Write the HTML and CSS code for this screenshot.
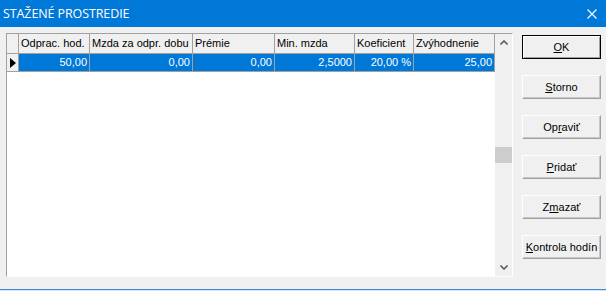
FILE: index.html
```html
<!DOCTYPE html>
<html lang="sk">
<head>
    <meta charset="UTF-8">
    <title>Stažené prostredie</title>
    <link rel="stylesheet" href="styles.css">
</head>
<body>
<div class="window">
    <div class="title-bar">
        <span class="title">STAŽENÉ PROSTREDIE</span>
        <svg class="close" width="10" height="10" viewBox="0 0 10 10">
            <path d="M0.5 0.5 L9.5 9.5 M9.5 0.5 L0.5 9.5" stroke="#fff" stroke-width="1.1" fill="none"/>
        </svg>
    </div>
    <div class="content">
        <div class="grid">
            <div class="table">
                <div class="row head">
                    <div class="cell ind"></div>
                    <div class="cell c1">Odprac. hod.</div>
                    <div class="cell c2">Mzda za odpr. dobu</div>
                    <div class="cell c3">Prémie</div>
                    <div class="cell c4">Min. mzda</div>
                    <div class="cell c5">Koeficient</div>
                    <div class="cell c6">Zvýhodnenie</div>
                </div>
                <div class="row data selected">
                    <div class="cell ind"><span class="arrow"></span></div>
                    <div class="cell c1">50,00</div>
                    <div class="cell c2">0,00</div>
                    <div class="cell c3">0,00</div>
                    <div class="cell c4">2,5000</div>
                    <div class="cell c5">20,00 %</div>
                    <div class="cell c6">25,00</div>
                </div>
            </div>
            <div class="scrollbar">
                <div class="sb-btn">
                    <svg width="8" height="5" viewBox="0 0 8 5"><path d="M0.5 4.5 L4 1 L7.5 4.5" stroke="#606060" stroke-width="1.6" fill="none"/></svg>
                </div>
                <div class="sb-track">
                    <div class="sb-thumb"></div>
                </div>
                <div class="sb-btn">
                    <svg width="8" height="5" viewBox="0 0 8 5"><path d="M0.5 0.5 L4 4 L7.5 0.5" stroke="#606060" stroke-width="1.6" fill="none"/></svg>
                </div>
            </div>
        </div>
        <div class="buttons">
            <button class="btn default" type="button"><u>O</u>K</button>
            <button class="btn" type="button"><u>S</u>torno</button>
            <button class="btn" type="button">Op<u>r</u>aviť</button>
            <button class="btn" type="button"><u>P</u>ridať</button>
            <button class="btn" type="button">Z<u>m</u>azať</button>
            <button class="btn" type="button"><u>K</u>ontrola hodín</button>
        </div>
    </div>
    <div class="bottom-line"></div>
</div>
</body>
</html>
```

FILE: styles.css
```css
body {
    margin: 0;
    padding: 0;
    background-color: #f0f0f0;
    font-family: 'Liberation Sans', Arial, sans-serif;
    font-size: 11px;
    color: #000;
}

.window {
    width: 606px;
    height: 291px;
    display: flex;
    flex-direction: column;
    overflow: hidden;
}

.title-bar {
    height: 27px;
    flex: none;
    background-color: #0078d7;
    display: flex;
    align-items: center;
    justify-content: space-between;
    padding: 0 9px 0 3px;
    box-sizing: border-box;
}

.title {
    color: #fff;
    font-family: 'Open Sans', 'Noto Sans', sans-serif;
    font-size: 12.5px;
    letter-spacing: -0.1px;
    margin-top: -1px;
}

.close {
    display: block;
}

.content {
    flex: 1;
    display: flex;
    padding: 6px 0 0 6px;
}

.grid {
    width: 507px;
    height: 244px;
    box-sizing: border-box;
    background-color: #fff;
    border-left: 1px solid #a0a0a0;
    border-top: 1px solid #a0a0a0;
    border-right: 1px solid #fff;
    border-bottom: 1px solid #fff;
    display: flex;
}

.table {
    width: 488px;
}

.row {
    display: flex;
    border-bottom: 1px solid #a0a0a0;
}

.row.head {
    height: 19px;
    background-color: #f0f0f0;
}

.row.data {
    height: 17px;
}

.cell {
    box-sizing: border-box;
    border-right: 1px solid #a0a0a0;
    white-space: nowrap;
    overflow: hidden;
    line-height: 17px;
}

.head .cell {
    padding-left: 2px;
    line-height: 19px;
}

.data .cell {
    text-align: right;
    padding-right: 2px;
}

.selected .cell {
    background-color: #0078d7;
    color: #fff;
}

.selected .cell.ind {
    background-color: #f0f0f0;
}

.ind { width: 12px; background-color: #f0f0f0; }
.c1 { width: 71px; }
.c2 { width: 103px; }
.c3 { width: 82px; }
.c4 { width: 80px; }
.c5 { width: 59px; }
.c6 { width: 81px; }

.arrow {
    display: block;
    width: 0;
    height: 0;
    margin: 4px 0 0 3px;
    border-top: 5px solid transparent;
    border-bottom: 5px solid transparent;
    border-left: 6px solid #000;
}

.scrollbar {
    width: 17px;
    background-color: #f0f0f0;
    display: flex;
    flex-direction: column;
}

.sb-btn {
    height: 17px;
    display: flex;
    align-items: center;
    justify-content: center;
}

.sb-track {
    flex: 1;
    padding-top: 96px;
}

.sb-thumb {
    height: 16px;
    background-color: #cdcdcd;
}

.buttons {
    margin-left: 9px;
    margin-top: 2px;
    display: flex;
    flex-direction: column;
    gap: 16px;
}

.btn {
    width: 79px;
    height: 24px;
    box-sizing: border-box;
    font-family: 'Liberation Sans', Arial, sans-serif;
    font-size: 11px;
    font-weight: 400;
    color: #000;
    background-color: #f0f0f0;
    border: 1px solid;
    border-color: #fff #a0a0a0 #a0a0a0 #fff;
    box-shadow: inset -1px -1px 0 #c8c8c8;
    padding: 0;
    cursor: pointer;
}

.btn.default {
    border: 1px solid #000;
    box-shadow: inset 1px 1px 0 #fff, inset -1px -1px 0 #a0a0a0;
}

.bottom-line {
    height: 1px;
    flex: none;
    background-color: #3c8ad8;
    border-bottom: 1px solid #d4e5f7;
}
```
